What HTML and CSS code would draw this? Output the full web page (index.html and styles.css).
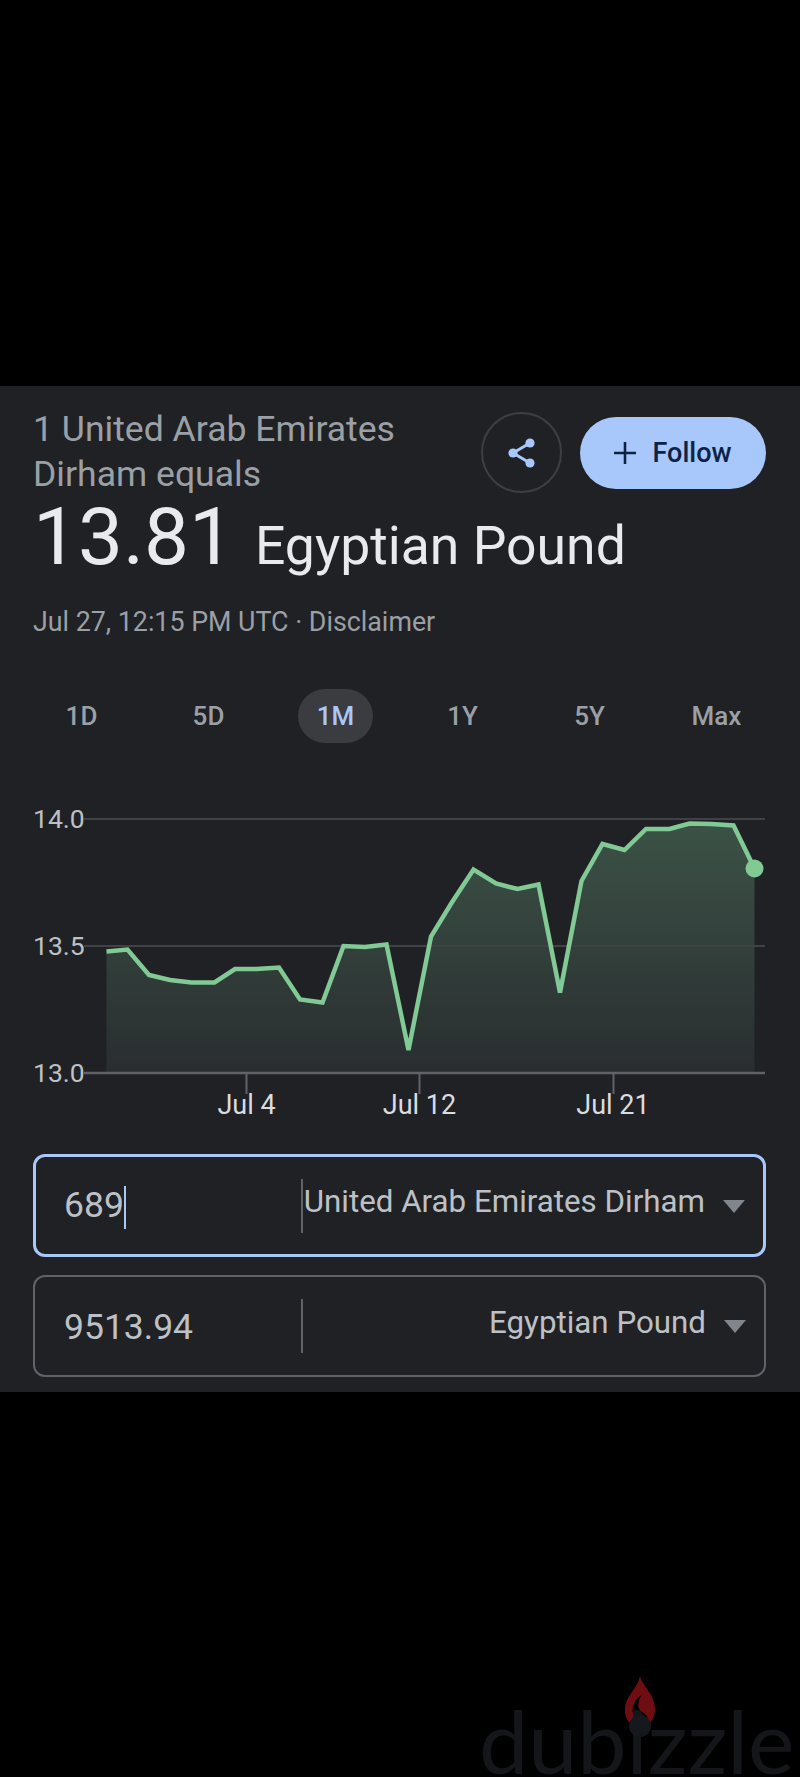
FILE: index.html
```html
<!DOCTYPE html>
<html lang="en">
<head>
    <meta charset="UTF-8">
    <meta name="viewport" content="width=device-width, initial-scale=1.0">
    <title>Currency converter</title>
    <link rel="stylesheet" href="styles.css">
</head>
<body>
    <div class="band-top"></div>
    <main class="card">
        <div class="head">
            <div class="title">1 United Arab Emirates<br>Dirham equals</div>
            <div class="actions">
                <button class="share" aria-label="Share">
                    <svg width="30" height="30" viewBox="0 0 30 30">
                        <path d="M23 5 L6 15 L23 25" fill="none" stroke="#a8c7fa" stroke-width="3"/>
                        <circle cx="23" cy="5" r="4.6" fill="#a8c7fa"/>
                        <circle cx="6" cy="15" r="4.6" fill="#a8c7fa"/>
                        <circle cx="23" cy="25" r="4.6" fill="#a8c7fa"/>
                    </svg>
                </button>
                <button class="follow">
                    <svg width="22" height="22" viewBox="0 0 22 22">
                        <path d="M11 0 V22 M0 11 H22" stroke="#0d2346" stroke-width="2.6"/>
                    </svg>
                    Follow
                </button>
            </div>
        </div>
        <div class="price">
            <span class="rate">13.81</span>
            <span class="currency">Egyptian Pound</span>
        </div>
        <div class="stamp">Jul 27, 12:15 PM UTC · Disclaimer</div>

        <div class="tabs">
            <div class="tab">1D</div>
            <div class="tab">5D</div>
            <div class="tab active">1M</div>
            <div class="tab">1Y</div>
            <div class="tab">5Y</div>
            <div class="tab">Max</div>
        </div>

        <svg class="chart" width="800" height="330" viewBox="0 800 800 330">
            <defs>
                <linearGradient id="areaFill" x1="0" y1="0" x2="0" y2="1">
                    <stop offset="0" stop-color="#3c5246"/>
                    <stop offset="1" stop-color="#292d30"/>
                </linearGradient>
            </defs>
            <path fill="url(#areaFill)" d="M106.5 951.5 L127.5 949.5 L149 975 L170 980 L191.5 982.5 L214.5 982.5 L235 969 L256.5 969 L279 967.5 L300 999.5 L322.5 1002.5 L343.5 946 L365 947 L386.5 944.5 L408.5 1050 L431 936.5 L451.5 903 L473.5 869.5 L496 883.5 L517.5 889 L538.5 884.5 L560 992.5 L581.5 881 L602.5 844 L624.5 850 L646 829 L669.5 829 L689.5 823.5 L711.5 824 L733.5 825.5 L754.5 868.5 V1073 H106.5 Z"/>
            <g class="grid">
                <line x1="84" y1="819" x2="765" y2="819"/>
                <line x1="84" y1="946" x2="765" y2="946"/>
            </g>
            <line class="axis" x1="84" y1="1073" x2="765" y2="1073"/>
            <line class="axis-tick" x1="246.5" y1="1073" x2="246.5" y2="1094"/>
            <line class="axis-tick" x1="419.5" y1="1073" x2="419.5" y2="1094"/>
            <line class="axis-tick" x1="613.5" y1="1073" x2="613.5" y2="1094"/>
            <polyline class="trend" points="106.5,951.5 127.5,949.5 149,975 170,980 191.5,982.5 214.5,982.5 235,969 256.5,969 279,967.5 300,999.5 322.5,1002.5 343.5,946 365,947 386.5,944.5 408.5,1050 431,936.5 451.5,903 473.5,869.5 496,883.5 517.5,889 538.5,884.5 560,992.5 581.5,881 602.5,844 624.5,850 646,829 669.5,829 689.5,823.5 711.5,824 733.5,825.5 754.5,868.5"/>
            <circle cx="754.5" cy="868.5" r="9" fill="#81c995"/>
            <text class="y-label" x="33" y="828">14.0</text>
            <text class="y-label" x="33" y="955">13.5</text>
            <text class="y-label" x="33" y="1082">13.0</text>
            <text class="x-label" x="246.5" y="1114">Jul 4</text>
            <text class="x-label" x="419.5" y="1114">Jul 12</text>
            <text class="x-label" x="613" y="1114">Jul 21</text>
        </svg>

        <div class="converter">
            <div class="field focused">
                <div class="amount">689<span class="caret"></span></div>
                <div class="unit">United Arab Emirates Dirham<span class="arrow"></span></div>
            </div>
            <div class="field">
                <div class="amount">9513.94</div>
                <div class="unit">Egyptian Pound<span class="arrow"></span></div>
            </div>
        </div>
    </main>
    <footer class="band-bottom">
        <div class="watermark">dubizzle</div>
        <svg class="flame" width="36" height="62" viewBox="0 0 36 62">
            <path d="M18 0 C20 10 33 18 33 33 C33 40 30 45 26 49 C27 41 24 38 20 36 C15 33 15 27 20 18 C13 24 9 31 11 38 C12 43 13 46 10 49 C5 45 3 40 3 34 C3 20 15 14 18 0 Z" fill="#6e0e12"/>
            <circle cx="18" cy="50" r="11" fill="#15191d"/>
        </svg>
    </footer>
</body>
</html>
```

FILE: styles.css
```css
* {
    box-sizing: border-box;
}

body {
    margin: 0;
    background-color: #000;
    font-family: Roboto, "Liberation Sans", sans-serif;
    display: flex;
    flex-direction: column;
    min-height: 1777px;
}

.band-top {
    height: 386px;
}

.card {
    height: 1006px;
    background-color: #202124;
    padding: 21px 34px 15px 33px;
    color: #9aa0a6;
}

.head {
    display: flex;
    justify-content: space-between;
}

.title {
    font-size: 35.6px;
    line-height: 45px;
    white-space: nowrap;
}

.actions {
    display: flex;
    align-items: center;
    gap: 18px;
    margin-top: 5px;
    height: 81px;
}

.share {
    width: 81px;
    height: 81px;
    border: 2px solid #3c4043;
    border-radius: 50%;
    background: none;
    padding: 0;
    display: flex;
    align-items: center;
    justify-content: center;
}

.follow {
    width: 186px;
    height: 72px;
    border: none;
    border-radius: 36px;
    background-color: #a8c7fa;
    color: #0d2346;
    font-family: inherit;
    font-size: 27px;
    font-weight: 500;
    display: flex;
    align-items: center;
    justify-content: center;
    gap: 16px;
}

.price {
    display: flex;
    align-items: baseline;
    gap: 21px;
    height: 86px;
    line-height: 81px;
    color: #e8eaed;
}

.rate {
    font-size: 80px;
}

.currency {
    font-size: 53.5px;
}

.stamp {
    margin-top: 22px;
    font-size: 26.8px;
    line-height: 34px;
}

.tabs {
    display: grid;
    grid-template-columns: repeat(6, 127px);
    margin: 50px 0 0 -15px;
    justify-items: center;
}

.tab {
    width: 75px;
    height: 54px;
    line-height: 54px;
    text-align: center;
    font-size: 26px;
    font-weight: 500;
}

.tab.active {
    background-color: #3a3c40;
    border-radius: 27px;
    color: #a8c7fa;
}

.chart {
    display: block;
    margin: 57px 0 0 -33px;
}

.grid line {
    stroke: #3f4145;
    stroke-width: 2;
}

.axis {
    stroke: #5f6368;
    stroke-width: 2.5;
}

.axis-tick {
    stroke: #5f6368;
    stroke-width: 2;
}

.trend {
    fill: none;
    stroke: #81c995;
    stroke-width: 4.5;
}

.y-label {
    font-size: 26.5px;
    fill: #bdc1c6;
}

.x-label {
    font-size: 27px;
    fill: #dadce0;
    text-anchor: middle;
}

.converter {
    margin-top: 24px;
    display: flex;
    flex-direction: column;
    gap: 18px;
}

.field {
    height: 102px;
    border: 2px solid #5f6368;
    border-radius: 12px;
    display: flex;
    align-items: center;
    color: #bdc1c6;
}

.field.focused {
    height: 103px;
    border: 3px solid #a8c7fa;
}

.amount {
    width: 268px;
    height: 54px;
    line-height: 56px;
    padding-left: 29px;
    font-size: 35.5px;
    border-right: 2px solid #5f6368;
}

.focused .amount {
    width: 267px;
    line-height: 52px;
    padding-left: 28px;
}

.caret {
    display: inline-block;
    width: 2px;
    height: 43px;
    background-color: #a8c7fa;
    vertical-align: middle;
}

.unit {
    flex: 1;
    display: flex;
    align-items: center;
    justify-content: flex-end;
    font-size: 31.3px;
    line-height: 46px;
    margin-top: -7px;
    padding-right: 18px;
    white-space: nowrap;
}

.arrow {
    width: 0;
    height: 0;
    margin: 8px 0 0 18px;
    border-left: 11px solid transparent;
    border-right: 11px solid transparent;
    border-top: 13px solid #80868b;
}

.band-bottom {
    flex: 1;
    position: relative;
    overflow: hidden;
}

.watermark {
    position: absolute;
    left: 479px;
    top: 311px;
    font-family: Lato, sans-serif;
    font-size: 88px;
    line-height: 74px;
    white-space: nowrap;
    color: #15161a;
}

.flame {
    position: absolute;
    left: 622px;
    top: 284px;
}
```
